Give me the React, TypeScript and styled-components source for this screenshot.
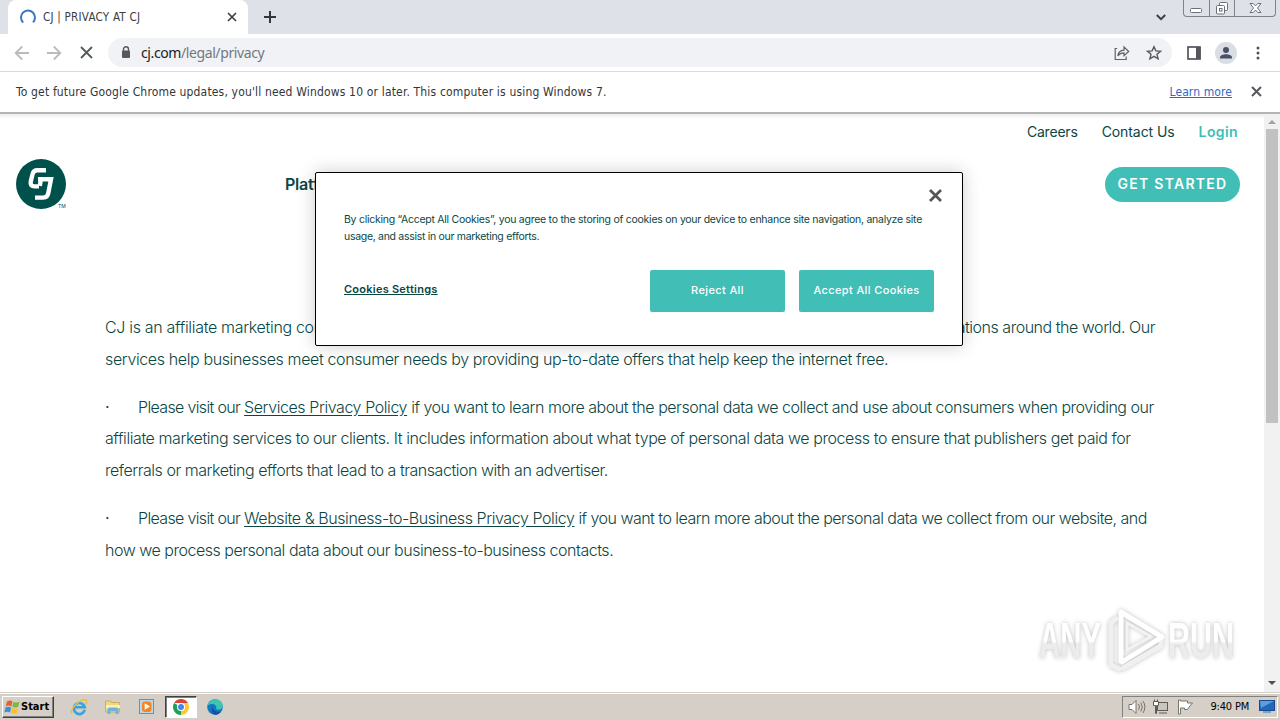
import React from "react";
import styled, { createGlobalStyle } from "styled-components";

const colors = {
  green: "#00504b",
  text: "#0b4643",
  teal: "#41beb6",
  chrome: "#dee1e8",
  taskbar: "#d5cfc7",
};

const uiFont = '"DejaVu Sans Condensed", "DejaVu Sans", sans-serif';
const siteFont = 'Inter, "Liberation Sans", sans-serif';

export default function App() {
  return (
    <Screen>
      <GlobalStyle />
      <TabStrip />
      <Toolbar />
      <InfoBar>
        <InfoText>
          To get future Google Chrome updates, you'll need Windows 10 or later. This computer is using Windows 7.
        </InfoText>
        <InfoActions>
          <LearnMore>Learn more</LearnMore>
          <Cross size={9} color="#55585c" width={2} />
        </InfoActions>
      </InfoBar>
      <Viewport>
        <Page />
        <ScrollBar>
          <Arrow $color="#a3a3a3" $up />
          <Thumb />
          <Arrow $color="#505050" />
        </ScrollBar>
      </Viewport>
      <Taskbar />
    </Screen>
  );
}

function TabStrip() {
  return (
    <Tabs>
      <Tab>
        <svg width="16" height="16" viewBox="0 0 16 16" fill="none">
          <path d="M3.2 13.6A7 7 0 1 1 13 13.4" stroke="#3b76c4" strokeWidth="2" />
        </svg>
        <TabTitle>CJ | PRIVACY AT CJ</TabTitle>
        <Cross size={8} color="#3c4043" width={1.7} />
      </Tab>
      <NewTab>
        <svg width="12" height="12" viewBox="0 0 12 12" stroke="#33363b" strokeWidth="2">
          <path d="M6 0v12M0 6h12" />
        </svg>
      </NewTab>
      <TabSearch>
        <svg width="10" height="7" viewBox="0 0 10 7" fill="none" stroke="#3c4043" strokeWidth="2">
          <path d="M.8 1 5 5.2 9.2 1" />
        </svg>
      </TabSearch>
      <WindowButtons>
        <WindowButton $width={25}>
          <svg width="13" height="17" viewBox="0 0 13 17" fill="#fff" stroke="#6b6f78">
            <rect x="0.5" y="8.5" width="11" height="4" rx="1" />
          </svg>
        </WindowButton>
        <WindowButton $width={25}>
          <svg width="14" height="17" viewBox="0 0 14 17" fill="#fff" stroke="#6b6f78">
            <rect x="4.5" y="2.5" width="8" height="8" rx="1" />
            <rect x="1.5" y="5.5" width="8" height="8.5" rx="1" />
            <rect x="4.5" y="8.5" width="2.5" height="2.5" />
          </svg>
        </WindowButton>
        <WindowButton $width={42}>
          <svg width="13" height="17" viewBox="0 0 13 17" fill="#fff" stroke="#6b6f78">
            <path d="M1 3.5h3.2l2.3 2.4 2.3-2.4H12L8.500 8l3.500 4.500H8.800L6.500 10l-2.300 2.500H1L4.500 8z" />
          </svg>
        </WindowButton>
      </WindowButtons>
    </Tabs>
  );
}

function Toolbar() {
  return (
    <ToolbarRow>
      <NavIcon>
        <svg width="16" height="16" viewBox="0 0 16 16" fill="none" stroke="#b9bbbe" strokeWidth="1.8">
          <path d="M15 8H2M8.2 1.5 1.7 8l6.5 6.5" />
        </svg>
      </NavIcon>
      <NavIcon>
        <svg width="16" height="16" viewBox="0 0 16 16" fill="none" stroke="#b9bbbe" strokeWidth="1.8">
          <path d="M1 8h13M7.8 1.5 14.3 8l-6.5 6.5" />
        </svg>
      </NavIcon>
      <NavIcon>
        <Cross size={11} color="#55585c" width={1.8} />
      </NavIcon>
      <AddressBar>
        <svg width="10" height="13" viewBox="0 0 10 13">
          <path d="M2.5 5.5V3.3a2.5 2.5 0 0 1 5 0v2.2" fill="none" stroke="#55585c" strokeWidth="1.4" />
          <rect x="1" y="4.5" width="8" height="7.5" rx="1" fill="#55585c" />
        </svg>
        <Url>
          cj.com<UrlPath>/legal/privacy</UrlPath>
        </Url>
        <svg width="16" height="16" viewBox="0 0 16 16" fill="none" stroke="#5f6368" strokeWidth="1.2">
          <path d="M3.2 3.5H1.2v11h11v-3" />
          <path d="M3.8 10.8C4.3 7.3 6.5 5.3 10 5.1V2l4.7 4.5L10 10.7V7.9c-2.7 0-4.7.9-6.2 2.9z" />
        </svg>
        <StarIcon width="16" height="16" viewBox="0 0 16 16" fill="none" stroke="#55585c" strokeWidth="1.4">
          <path d="m8 1.7 1.9 4.2 4.6.4-3.5 3 1.1 4.5L8 11.4l-4.1 2.4L5 9.3l-3.5-3 4.6-.4z" />
        </StarIcon>
      </AddressBar>
      <SidePanel width="14" height="14" viewBox="0 0 14 14">
        <rect x="1" y="1" width="12" height="12" fill="#fff" stroke="#55565b" strokeWidth="1.7" />
        <rect x="9" y="1" width="4.5" height="12" fill="#55565b" />
      </SidePanel>
      <svg width="22" height="22" viewBox="0 0 22 22">
        <circle cx="11" cy="11" r="11" fill="#dadde4" />
        <circle cx="11" cy="8" r="3" fill="#4a5068" />
        <path d="M5 16.5v-1.2c0-2 3.4-3.1 6-3.1s6 1.1 6 3.1v1.2z" fill="#4a5068" />
      </svg>
      <MenuDots width="4" height="14" viewBox="0 0 4 14" fill="#505357">
        <circle cx="2" cy="2" r="1.5" />
        <circle cx="2" cy="7" r="1.5" />
        <circle cx="2" cy="12" r="1.5" />
      </MenuDots>
    </ToolbarRow>
  );
}

function Page() {
  return (
    <Site>
      <TopLinks>
        <TopLink $spacing={-0.2}>Careers</TopLink>
        <TopLink $spacing={-0.08}>Contact Us</TopLink>
        <TopLink $spacing={0.4} $accent>
          Login
        </TopLink>
      </TopLinks>
      <Header>
        <svg width="52" height="52" viewBox="0 0 52 52">
          <circle cx="25" cy="25" r="25" fill={colors.green} />
          <g fill="none" stroke="#fff" strokeWidth="4.4">
            <path d="M30 11.2H21.5Q17.3 11.2 16.500 15.200L14.800 22.500Q13.800 27.400 18.500 27.400H23" />
            <path d="M22 20.200H35L32.300 34.200Q31.500 38.600 27.300 38.600H19" />
            <path d="M25 19.500L23.800 27" />
          </g>
          <text x="42" y="49" fontSize="5" fontFamily="Inter, sans-serif" fill={colors.green}>
            TM
          </text>
        </svg>
        <NavItem>Platform</NavItem>
        <GetStarted>GET STARTED</GetStarted>
      </Header>
      <Article>
        <Paragraph>
          <SplitLine>
            <Line $spacing={-0.32}>CJ is an affiliate marketing company</Line>
            <Line $spacing={-0.47}>organizations around the world. Our</Line>
          </SplitLine>
          <Line $spacing={-0.376}>
            services help businesses meet consumer needs by providing up-to-date offers that help keep the internet free.
          </Line>
        </Paragraph>
        <Paragraph>
          <BulletLine>
            <Bullet>·</Bullet>
            <Line $spacing={-0.47}>
              <Lead>Please visit our </Lead>
              <PolicyLink>Services Privacy Policy</PolicyLink> if you want to learn more about the personal data we
              collect and use about consumers when providing our
            </Line>
          </BulletLine>
          <Line $spacing={-0.424}>
            affiliate marketing services to our clients. It includes information about what type of personal data we
            process to ensure that publishers get paid for
          </Line>
          <Line $spacing={-0.468}>
            referrals or marketing efforts that lead to a transaction with an advertiser.
          </Line>
        </Paragraph>
        <Paragraph>
          <BulletLine>
            <Bullet>·</Bullet>
            <Line $spacing={-0.53}>
              <Lead>Please visit our </Lead>
              <PolicyLink>Website & Business-to-Business Privacy Policy</PolicyLink> if you want to learn more about
              the personal data we collect from our website, and
            </Line>
          </BulletLine>
          <Line $spacing={-0.478}>how we process personal data about our business-to-business contacts.</Line>
        </Paragraph>
      </Article>
      <CookieBanner />
      <Watermark />
    </Site>
  );
}

function CookieBanner() {
  return (
    <Banner>
      <BannerClose>
        <Cross size={11} color="#565656" width={2.8} />
      </BannerClose>
      <BannerText>
        <BannerLine $spacing={-0.26}>
          By clicking “Accept All Cookies”, you agree to the storing of cookies on your device to enhance site
          navigation, analyze site
        </BannerLine>
        <BannerLine $spacing={-0.3}>usage, and assist in our marketing efforts.</BannerLine>
      </BannerText>
      <BannerActions>
        <SettingsLink>Cookies Settings</SettingsLink>
        <BannerButton>Reject All</BannerButton>
        <BannerButton>Accept All Cookies</BannerButton>
      </BannerActions>
    </Banner>
  );
}

function Watermark() {
  return (
    <WatermarkSvg width="216" height="76" viewBox="0 0 216 76">
      <defs>
        <linearGradient id="fade" x1="0" y1="0" x2="0" y2="1">
          <stop offset="0.5" stopColor="#fff" />
          <stop offset="0.55" stopColor="#ececec" />
        </linearGradient>
      </defs>
      <g
        fill="url(#fade)"
        fontFamily='"Liberation Sans Narrow", "Liberation Sans", sans-serif'
        fontSize="50"
        fontWeight="bold"
      >
        <text x="9" y="55" textLength="62" lengthAdjust="spacingAndGlyphs">
          ANY
        </text>
        <text x="138" y="55" textLength="66" lengthAdjust="spacingAndGlyphs">
          RUN
        </text>
      </g>
      <g fill="none" strokeLinejoin="round" strokeLinecap="round">
        <path d="M86 16l-5 4v42l8 4M93 65l38-22v-6" stroke="#f0f0f0" strokeWidth="5" />
        <path d="M91 58V9l41 25-40 25" stroke="#fff" strokeWidth="5" />
        <path d="M97 20v27l24-13.500z" stroke="#f3f3f3" strokeWidth="3" />
      </g>
    </WatermarkSvg>
  );
}

function Taskbar() {
  return (
    <TaskbarRow>
      <StartButton>
        <svg width="17" height="16" viewBox="0 0 17 16">
          <path d="M3 2.5Q6 .5 8.5 2.3L7.400 7.400Q4.800 5.800 1.700 7.500z" fill="#e8602c" />
          <path d="M9.500 2.800Q12 4.300 15.500 2.600L14.300 7.700Q11 9.300 8.300 7.800z" fill="#7db843" />
          <path d="M1.500 8.500Q4.500 6.800 7.200 8.500L6 13.500Q3.500 11.900.3 13.500z" fill="#3f8ed8" />
          <path d="M8.100 8.900Q10.800 10.400 14 8.800L12.800 13.900Q9.700 15.400 6.900 13.900z" fill="#f7c130" />
        </svg>
        Start
      </StartButton>
      <QuickLaunch>
        <QuickItem>
          <svg width="18" height="18" viewBox="0 0 18 18" fill="none">
            <path d="M14.800 11.800A5.500 5.500 0 1 1 14.800 9.300H5" stroke="#3ba3dc" strokeWidth="2.600" />
            <path d="M2 15.500Q-.5 13 6 6.500T16.500 2.500Q17.500 4 15.500 6.500" stroke="#e9bf3f" strokeWidth="1.400" />
          </svg>
        </QuickItem>
        <QuickItem>
          <svg width="18" height="18" viewBox="0 0 18 18">
            <path d="M1.500 3h5l1 1.500h8V14h-14z" fill="#f0d583" stroke="#c9a34a" strokeWidth=".8" />
            <path d="M2 7h14v3H2z" fill="#fbf0b8" />
            <path d="M3.500 16v-4.500q0-2 2-2h7q2 0 2 2V16h-3v-3h-5v3z" fill="#6db4dd" />
          </svg>
        </QuickItem>
        <QuickItem>
          <svg width="18" height="18" viewBox="0 0 18 18">
            <rect x="1.500" y="1.500" width="14" height="14" fill="#b9d7ed" stroke="#5f94be" />
            <rect x="4" y="3.500" width="9.500" height="10.500" rx="3" fill="#f5861f" />
            <path d="M6.700 5.200v6.600l5.300-3.300z" fill="#fff" />
          </svg>
        </QuickItem>
        <QuickItem $active>
          <svg width="18" height="18" viewBox="0 0 18 18">
            <path d="M9 9V1L15.930 5A8 8 0 0 1 9 17z" fill="#fcc934" />
            <path d="M2.070 5 9 9v8A8 8 0 0 1 2.070 5z" fill="#1fa055" />
            <path d="M2.070 5A8 8 0 0 1 15.930 5H9z" fill="#db4437" />
            <circle cx="9" cy="9" r="4" fill="#fff" />
            <circle cx="9" cy="9" r="3" fill="#4285f4" />
          </svg>
        </QuickItem>
        <QuickItem>
          <svg width="18" height="18" viewBox="0 0 18 18">
            <circle cx="9" cy="9" r="7.800" fill="#1476c6" />
            <path d="M1.400 8C2.400 3.500 5.500 1.200 9.200 1.200c4.300 0 7.600 3.300 7.600 6.500 0 2.600-2 4-4.300 4-1.700 0-2.700-.7-2.300-1.600C11.500 7 5.500 3.700 1.400 8z" fill="#3cc5b0" />
            <path d="M7 8.500c-.6 3.500 3.200 6.300 8 4.900-1.500 2.300-4 3.400-6 3.400C5.600 15.500 4.800 10.500 7 8.500z" fill="#17509b" />
          </svg>
        </QuickItem>
      </QuickLaunch>
      <Tray>
        <svg width="18" height="16" viewBox="0 0 18 16" fill="none" stroke="#77746e">
          <path d="M1 5.500h3l4-4v13l-4-4H1z" fill="#fff" />
          <path d="M10.500 5q2 3 0 6M12.800 3.500q3 4.500 0 9M15 2q3.800 6 0 12" />
        </svg>
        <svg width="18" height="16" viewBox="0 0 18 16" fill="#fff" stroke="#5f5c56">
          <rect x="5.500" y="3.500" width="10" height="8" fill="#c9c6c0" />
          <path d="M1.500 2.500h5v4h-2v8h-1v-8h-2zM2.500.5v2M5.500.5v2M7 14h8" />
        </svg>
        <FlagIcon width="18" height="16" viewBox="0 0 18 16" fill="#fff" stroke="#77746e">
          <path d="M1.500 1v14h2V9h4v1.500h3q2-3.500 5-6.500h-5V2h-7V1z" />
        </FlagIcon>
        <Clock>9:40 PM</Clock>
        <svg width="16" height="15" viewBox="0 0 16 15">
          <rect x=".5" y="1.500" width="15" height="10" fill="#2367bd" stroke="#184a8d" />
          <path d="M1 2h14L2 9z" fill="#5c9de2" />
          <path d="M4 13h8" stroke="#5f94be" strokeWidth="1.500" />
        </svg>
      </Tray>
    </TaskbarRow>
  );
}

interface CrossProps {
  size: number;
  color: string;
  width: number;
}

function Cross({ size, color, width }: CrossProps) {
  return (
    <CrossSvg width={size} height={size} viewBox={`0 0 ${size} ${size}`} stroke={color} strokeWidth={width}>
      <path d={`M0 0L${size} ${size}M${size} 0L0 ${size}`} />
    </CrossSvg>
  );
}

const GlobalStyle = createGlobalStyle`
  * {
    box-sizing: border-box;
  }

  body {
    margin: 0;
    overflow: hidden;
  }

  svg {
    flex: none;
    display: block;
  }
`;

const CrossSvg = styled.svg`
  overflow: visible;
`;

const Screen = styled.div`
  width: 1280px;
  height: 720px;
  display: flex;
  flex-direction: column;
  background: #fff;
  font-family: ${uiFont};
  overflow: hidden;
  white-space: nowrap;
`;

const Tabs = styled.div`
  height: 34px;
  flex: none;
  display: flex;
  align-items: flex-start;
  padding-left: 8px;
  background: ${colors.chrome};
`;

const Tab = styled.div`
  width: 240px;
  height: 34px;
  display: flex;
  align-items: center;
  padding: 0 12px;
  background: #fff;
  border-radius: 8px 8px 0 0;
`;

const TabTitle = styled.span`
  flex: 1;
  margin-left: 7px;
  font-size: 11.5px;
  letter-spacing: 0.25px;
  color: #3a3d41;
`;

const NewTab = styled.div`
  height: 34px;
  display: flex;
  align-items: center;
  margin-left: 16px;
`;

const TabSearch = styled.div`
  height: 34px;
  display: flex;
  align-items: center;
  margin-left: auto;
`;

const WindowButtons = styled.div`
  display: flex;
  height: 17px;
  margin: 0 4px 0 17px;
  border: 1px solid #7e828c;
  border-top: none;
  border-radius: 0 0 4px 4px;
`;

const WindowButton = styled.div<{ $width: number }>`
  width: ${(props) => props.$width}px;
  display: flex;
  justify-content: center;

  & + & {
    border-left: 1px solid #7e828c;
  }

  &:last-child {
    width: ${(props) => props.$width - 1}px;
  }
`;

const ToolbarRow = styled.div`
  height: 38px;
  flex: none;
  display: flex;
  align-items: center;
  padding: 0 20px 0 6px;
  border-bottom: 1px solid #d8dadd;
`;

const NavIcon = styled.div`
  width: 32px;
  display: flex;
  justify-content: center;
`;

const AddressBar = styled.div`
  flex: 1;
  height: 29px;
  display: flex;
  align-items: center;
  margin: 0 15px 0 6px;
  padding: 0 10px 0 13px;
  border-radius: 15px;
  background: #f0f2f5;
`;

const Url = styled.span`
  flex: 1;
  margin-left: 10px;
  font-family: "Noto Sans", "Open Sans", sans-serif;
  font-size: 14px;
  letter-spacing: -0.4px;
  color: #202124;
`;

const UrlPath = styled.span`
  color: #74787d;
`;

const StarIcon = styled.svg`
  margin-left: 16px;
`;

const SidePanel = styled.svg`
  margin-right: 14px;
`;

const MenuDots = styled.svg`
  margin-left: 19px;
`;

const InfoBar = styled.div`
  height: 42px;
  flex: none;
  display: flex;
  align-items: center;
  justify-content: space-between;
  padding: 0 19px 1px 16px;
  border-bottom: 2px solid #b5b5b5;
`;

const InfoText = styled.span`
  font-size: 12px;
  letter-spacing: 0.165px;
  color: #333639;
`;

const InfoActions = styled.div`
  display: flex;
  align-items: center;
  gap: 20px;
`;

const LearnMore = styled.a`
  font-size: 12px;
  letter-spacing: 0.1px;
  color: #2f6bc4;
  text-decoration: underline;
`;

const Viewport = styled.div`
  flex: 1;
  min-height: 0;
  display: flex;
  background: linear-gradient(#ececec, #fff 5px);
`;

const Site = styled.div`
  position: relative;
  flex: 1;
  font-family: ${siteFont};
  color: ${colors.text};
`;

const TopLinks = styled.div`
  height: 36px;
  display: flex;
  align-items: center;
  justify-content: flex-end;
  gap: 24px;
  padding: 0 26px 2px 0;
`;

const TopLink = styled.a<{ $spacing: number; $accent?: boolean }>`
  font-size: 14px;
  font-weight: ${(props) => (props.$accent ? 600 : 400)};
  letter-spacing: ${(props) => props.$spacing}px;
  color: ${(props) => (props.$accent ? colors.teal : colors.text)};
`;

const Header = styled.header`
  height: 52px;
  display: flex;
  align-items: center;
  margin-top: 9px;
  padding: 0 24px 0 16px;
`;

const NavItem = styled.span`
  margin-left: 217px;
  padding-bottom: 3px;
  font-size: 16px;
  font-weight: 600;
  letter-spacing: -0.2px;
`;

const GetStarted = styled.button`
  width: 135px;
  height: 35px;
  margin: 0 0 2px auto;
  padding: 0 0 1px;
  border: none;
  border-radius: 18px;
  background: ${colors.teal};
  color: #fff;
  font-family: inherit;
  font-size: 14px;
  font-weight: 600;
  letter-spacing: 1.25px;
`;

const Article = styled.main`
  width: 1050px;
  margin: 101px 0 0 105px;
`;

const Paragraph = styled.div`
  margin-bottom: 16px;
`;

const Line = styled.div<{ $spacing: number }>`
  height: 31.8px;
  line-height: 31.8px;
  font-size: 16px;
  font-weight: 300;
  letter-spacing: ${(props) => props.$spacing}px;
`;

const Lead = styled.span`
  letter-spacing: -0.65px;
`;

const SplitLine = styled.div`
  display: flex;
  justify-content: space-between;
`;

const BulletLine = styled.div`
  display: flex;
`;

const Bullet = styled.span`
  flex: none;
  width: 33px;
  line-height: 31.8px;
`;

const PolicyLink = styled.a`
  letter-spacing: -0.42px;
  text-decoration: underline;
  text-underline-offset: 2px;
`;

const Banner = styled.div`
  position: absolute;
  left: 315px;
  top: 58px;
  width: 648px;
  height: 174px;
  padding: 0 28px;
  border: 1px solid #000;
  border-radius: 2px;
  background: #fff;
  box-shadow: 0 0 18px rgba(0, 0, 0, 0.2);
`;

const BannerClose = styled.div`
  height: 38px;
  display: flex;
  justify-content: flex-end;
  margin-right: -7px;
  padding-top: 17px;
`;

const BannerText = styled.div`
  height: 59px;
`;

const BannerLine = styled.div<{ $spacing: number }>`
  font-size: 10.5px;
  line-height: 17px;
  letter-spacing: ${(props) => props.$spacing}px;
`;

const BannerActions = styled.div`
  display: flex;
  align-items: center;
  gap: 14px;
`;

const SettingsLink = styled.a`
  margin-right: auto;
  padding-bottom: 5px;
  font-size: 11px;
  font-weight: 600;
  letter-spacing: 0.25px;
  text-decoration: underline;
`;

const BannerButton = styled.button`
  width: 135px;
  height: 42px;
  padding: 0 0 2px;
  border: none;
  border-radius: 2px;
  background: ${colors.teal};
  color: #fff;
  font-family: inherit;
  font-size: 11px;
  font-weight: 500;
  letter-spacing: 0.38px;
`;

const WatermarkSvg = styled.svg`
  position: absolute;
  left: 1030px;
  top: 489px;
  overflow: visible;
  filter: drop-shadow(0 0 2px rgba(0, 0, 0, 0.25));
`;

const ScrollBar = styled.div`
  width: 16px;
  display: flex;
  flex-direction: column;
  align-items: center;
  padding: 6px 0 7px;
  background: #f1f1f1;
`;

const Arrow = styled.div<{ $color: string; $up?: boolean }>`
  border: 4px solid transparent;
  ${(props) =>
    props.$up
      ? `border-top: none; border-bottom-color: ${props.$color};`
      : `border-bottom: none; border-top-color: ${props.$color}; margin-top: auto;`}
`;

const Thumb = styled.div`
  width: 12px;
  height: 294px;
  margin-top: 5px;
  background: #c1c1c1;
`;

const TaskbarRow = styled.div`
  height: 28px;
  flex: none;
  display: flex;
  align-items: center;
  padding: 2px 2px 2px;
  border-top: 1px solid ${colors.taskbar};
  background: ${colors.taskbar};
  box-shadow: inset 0 1px #fff;
`;

const StartButton = styled.button`
  width: 52px;
  height: 22px;
  display: flex;
  align-items: center;
  padding: 0 0 0 1px;
  border: 1px solid;
  border-color: #fff #404040 #404040 #fff;
  box-shadow: inset -1px -1px #808080;
  background: ${colors.taskbar};
  color: #000;
  font-family: ${uiFont};
  font-size: 11px;
  font-weight: bold;
`;

const QuickLaunch = styled.div`
  display: flex;
  gap: 2px;
  margin-left: 9px;
`;

const QuickItem = styled.div<{ $active?: boolean }>`
  width: 32px;
  height: 22px;
  display: flex;
  align-items: center;
  justify-content: center;
  border: 1px solid transparent;
  ${(props) =>
    props.$active &&
    `
    border-color: #404040 #fff #fff #404040;
    box-shadow: inset 1px 1px #808080;
    background: #fff;
  `}
`;

const Tray = styled.div`
  width: 156px;
  height: 22px;
  display: flex;
  align-items: center;
  gap: 6px;
  margin-left: auto;
  padding: 0 2px 0 5px;
  border: 1px solid;
  border-color: #808080 #fff #fff #808080;
`;

const FlagIcon = styled.svg`
  margin-left: 1px;
`;

const Clock = styled.span`
  flex: 1;
  text-align: right;
  margin-right: 4px;
  font-size: 11px;
  letter-spacing: -0.2px;
  color: #000;
`;
